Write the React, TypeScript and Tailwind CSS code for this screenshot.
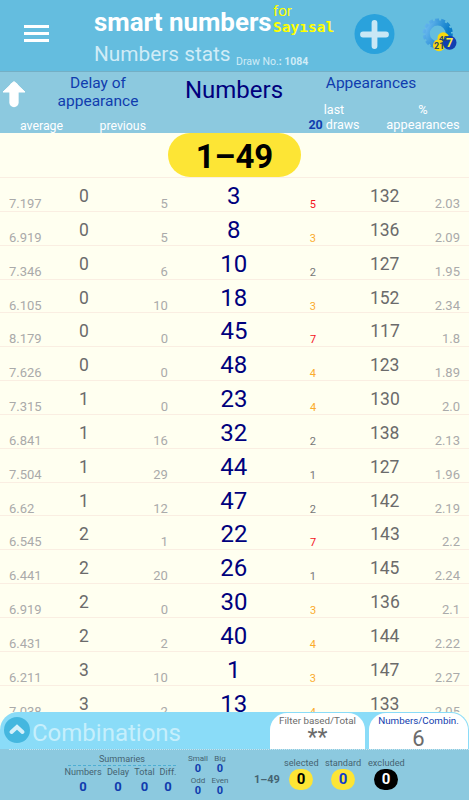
import clsx from "clsx";

type Row = [string, number, number, number, number, number, string];

// average delay, delay, previous delay, number, last 20 draws, appearances, %
const rows: Row[] = [
  ["7.197", 0, 5, 3, 5, 132, "2.03"],
  ["6.919", 0, 5, 8, 3, 136, "2.09"],
  ["7.346", 0, 6, 10, 2, 127, "1.95"],
  ["6.105", 0, 10, 18, 3, 152, "2.34"],
  ["8.179", 0, 0, 45, 7, 117, "1.8"],
  ["7.626", 0, 0, 48, 4, 123, "1.89"],
  ["7.315", 1, 0, 23, 4, 130, "2.0"],
  ["6.841", 1, 16, 32, 2, 138, "2.13"],
  ["7.504", 1, 29, 44, 1, 127, "1.96"],
  ["6.62", 1, 12, 47, 2, 142, "2.19"],
  ["6.545", 2, 1, 22, 7, 143, "2.2"],
  ["6.441", 2, 20, 26, 1, 145, "2.24"],
  ["6.919", 2, 0, 30, 3, 136, "2.1"],
  ["6.431", 2, 2, 40, 4, 144, "2.22"],
  ["6.211", 3, 10, 1, 3, 147, "2.27"],
  ["7.038", 3, 2, 13, 4, 133, "2.05"],
];

function lastColor(n: number) {
  if (n >= 5) return "text-[#f4131c]";
  if (n >= 3) return "text-[#fbab2c]";
  return "text-[#777]";
}

function GearIcon() {
  return (
    <svg width="36" height="36" viewBox="0 0 36 36" className="block">
      <defs>
        <linearGradient id="gear" x1="0" y1="0" x2="1" y2="0.4">
          <stop offset="0" stopColor="#6dbaf0" />
          <stop offset="1" stopColor="#087bc8" />
        </linearGradient>
      </defs>
      <circle cx="16.7" cy="16.5" r="10.6" fill="none" stroke="url(#gear)" strokeWidth="5.4" />
      <circle cx="16.7" cy="16.5" r="13.6" fill="none" stroke="url(#gear)" strokeWidth="3" strokeDasharray="4 2.1" />
      <circle cx="22.3" cy="21" r="5.8" fill="#f8d90b" />
      <circle cx="18" cy="28.3" r="6" fill="#f8d90b" />
      <circle cx="28.5" cy="25.7" r="7" fill="#123fb0" />
      <g fontFamily="Roboto" fontWeight="700">
        <text x="18" y="23.5" fontSize="8" fill="#29476b">42</text>
        <text x="13" y="31.8" fontSize="9" fill="#29476b">21</text>
        <text x="25" y="30" fontSize="12.5" fill="#ffed3b">7</text>
      </g>
    </svg>
  );
}

function Header() {
  return (
    <header className="flex h-[71px] bg-[#64bddf] text-white">
      <div className="w-[94px] pt-[25px] pl-6">
        <div className="h-[3px] w-[25px] bg-white" />
        <div className="mt-1 h-[3px] w-[25px] bg-white" />
        <div className="mt-1 h-[3px] w-[25px] bg-white" />
      </div>
      <div className="w-[260px] whitespace-nowrap">
        <div className="flex h-[41px]">
          <h1 className="w-[179px] pt-[7px] text-[25.900px] leading-[30px] font-bold">smart numbers</h1>
          <div className="pt-[3px] text-[#ffff00]">
            <p className="text-[15px] leading-4">for</p>
            <p className="font-['DejaVu_Sans_Mono',monospace] text-[14.500px] leading-4 font-bold">Sayısal</p>
          </div>
        </div>
        <div className="flex">
          <h2 className="w-[142px] text-[20.800px] leading-[26px] text-[#d0ecf7]">Numbers stats</h2>
          <p className="pt-[15px] text-[10.5px] leading-3 text-[#d0ecf7]">
            Draw No.<b>: 1084</b>
          </p>
        </div>
      </div>
      <svg width="42" height="42" viewBox="0 0 42 42" className="mt-[13px] block">
        <circle cx="20.5" cy="21" r="20" fill="#2aa2dc" />
        <path d="M20.5 10v23M9 21.500h23" stroke="#c9e7f5" strokeWidth="5.800" strokeLinecap="round" />
      </svg>
      <div className="mt-[17px] ml-[25px]">
        <GearIcon />
      </div>
    </header>
  );
}

function ColumnHeads() {
  return (
    <div className="flex h-[62px] border-t border-[#74afc5] bg-[#8cc9df] pt-px text-white">
      <svg width="29" height="40" viewBox="0 0 29 40" className="mt-1 block shrink-0">
        <path d="M14 10v15.500" stroke="#fff" strokeWidth="9.300" strokeLinecap="round" />
        <path d="M14 4.500L25 15H3z" fill="#fff" stroke="#fff" strokeWidth="1" strokeLinejoin="round" />
      </svg>
      <div className="w-[138px] shrink-0">
        <p className="pt-px text-center text-[15.500px] leading-[18px] text-[#103cae]">
          Delay of
          <br />
          appearance
        </p>
        <div className="-ml-[9px] flex justify-between pt-[9px] text-[12.300px] leading-[14px]">
          <span>average</span>
          <span className="mr-[21px]">previous</span>
        </div>
      </div>
      <p className="w-[134px] shrink-0 pt-px text-center text-2xl leading-8 text-[#00007d]">Numbers</p>
      <div className="w-[168px] shrink-0">
        <p className="pr-[28px] text-center text-[15.500px] leading-[20px] text-[#103cae]">Appearances</p>
        <div className="flex pt-[9px] text-center text-[12.800px] leading-[15px]">
          <p className="w-[66px] text-[12.500px]">
            last
            <br />
            <b className="text-[#103cae]">20</b> draws
          </p>
          <p className="ml-[17px] w-[78px]">
            %<br />
            appearances
          </p>
        </div>
      </div>
    </div>
  );
}

function StatRow({ row }: { row: Row }) {
  const [average, delay, previous, number, last, total, percent] = row;
  return (
    <div className="flex h-[33.85px] shrink-0 border-b border-[#faeee2]">
      <span className="w-[60px] pt-[18px] pl-[9px] text-[13px] leading-4 text-[#aaa]">{average}</span>
      <span className="w-12 pt-2 text-center text-[17.500px] leading-5 text-[#6b6b6b]">{delay}</span>
      <span className="w-[60px] pt-[18px] text-right text-[13px] leading-4 text-[#aaa]">{previous}</span>
      <span className="w-[132px] pt-1 text-center text-2xl leading-7 text-[#00007d]">{number}</span>
      <span className={clsx("w-[26px] pt-5 text-center text-[11px] leading-[13px]", lastColor(last))}>{last}</span>
      <span className="ml-[9px] w-[100px] pt-2 text-center text-[17.500px] leading-5 text-[#6b6b6b]">{total}</span>
      <span className="flex-1 pt-[18px] pr-[9px] text-right text-[13px] leading-4 text-[#aaa]">{percent}</span>
    </div>
  );
}

function CombinationsBar() {
  return (
    <div className="flex h-[37px] rounded-t-[18px] bg-[#8adcf8]">
      <svg width="28" height="28" viewBox="0 0 28 28" className="mt-1 ml-[3px] block">
        <circle cx="14" cy="14" r="13" fill="#44b7df" />
        <path d="M8.500 16L14 11L19.500 16" fill="none" stroke="#d5f1fb" strokeWidth="4" strokeLinecap="round" />
      </svg>
      <p className="w-[239px] pt-1.5 pl-px text-2xl leading-[30px] text-[#c6effc]">Combinations</p>
      <div className="mt-px w-[95px] rounded-t-[17px] bg-white text-center text-[#6b6b6b]">
        <p className="pt-px text-[9.800px] leading-[13px]">Filter based/Total</p>
        <p className="text-[23px] leading-[22px]">**</p>
      </div>
      <div className="mt-px ml-1 w-[99px] rounded-t-[17px] bg-white text-center text-[#6b6b6b]">
        <p className="pt-px text-[9.800px] leading-[13px] text-[#103cae]">Numbers/Combin.</p>
        <p className="text-[22px] leading-6">6</p>
      </div>
    </div>
  );
}

function Summary({ label, className }: { label: string; className: string }) {
  return (
    <div className={clsx("text-center", className)}>
      <p>{label}</p>
      <p className="pt-[2px] text-[13px] leading-[14px] font-bold text-[#103cae]">0</p>
    </div>
  );
}

function SmallCount({ label }: { label: string }) {
  return (
    <div className="w-[22px] text-center">
      <p className="text-[8px] leading-[9px]">{label}</p>
      <p className="text-[11px] leading-[11px] font-bold text-[#103cae]">0</p>
    </div>
  );
}

function Footer() {
  return (
    <footer className="bg-[#8cc9df] text-[#456371]">
      <div className="ml-[9px] border-t border-dotted border-[#c5e6f1]" />
      <div className="flex h-[50px]">
        <div className="ml-16 w-[114px] pt-[3px] text-[9.100px] leading-3 whitespace-nowrap">
          <p className="ml-1 w-[108px] border-b border-dashed border-[#4caed3] text-center">Summaries</p>
          <div className="flex">
            <Summary label="Numbers" className="w-[38px]" />
            <Summary label="Delay" className="ml-1 w-6" />
            <Summary label="Total" className="ml-1 w-[21px]" />
            <Summary label="Diff." className="ml-1 w-[18px]" />
          </div>
        </div>
        <div className="ml-[9px] grid h-[48px] w-[44px] grid-cols-2 pt-1">
          <SmallCount label="Small" />
          <SmallCount label="Big" />
          <SmallCount label="Odd" />
          <SmallCount label="Even" />
        </div>
        <p className="ml-[23px] w-[30px] pt-[23px] text-[11px] leading-[14px] font-bold whitespace-nowrap">1–49</p>
        <div className="flex pt-[7px] text-center text-[9.200px] leading-3 whitespace-nowrap">
          <div className="w-[34px]">
            <p>selected</p>
            <p className="mx-auto w-6 rounded-full bg-[#fde535] text-[15px] leading-[21px] font-bold text-black">0</p>
          </div>
          <div className="ml-[6px] w-[38px]">
            <p>standard</p>
            <p className="mx-auto w-6 rounded-full bg-[#fde535] text-[15px] leading-[21px] font-bold text-[#103ccb]">0</p>
          </div>
          <div className="ml-[6px] w-[36px]">
            <p>excluded</p>
            <p className="mx-auto w-6 rounded-full bg-black text-[15px] leading-[21px] font-bold text-white">0</p>
          </div>
        </div>
      </div>
    </footer>
  );
}

export default function App() {
  return (
    <div className="flex h-[800px] w-[469px] flex-col overflow-hidden bg-[#fffff0] font-[Roboto,sans-serif]">
      <Header />
      <ColumnHeads />
      <main className="flex h-[579px] flex-col overflow-hidden">
        <div className="flex h-[45px] shrink-0 justify-center border-b border-[#faeee2]">
          <p className="h-11 w-[133px] rounded-full bg-[#fde535] text-center text-[33px] leading-[48px] font-bold text-black">
            1–49
          </p>
        </div>
        {rows.map((row) => (
          <StatRow key={row[3]} row={row} />
        ))}
      </main>
      <CombinationsBar />
      <Footer />
    </div>
  );
}
